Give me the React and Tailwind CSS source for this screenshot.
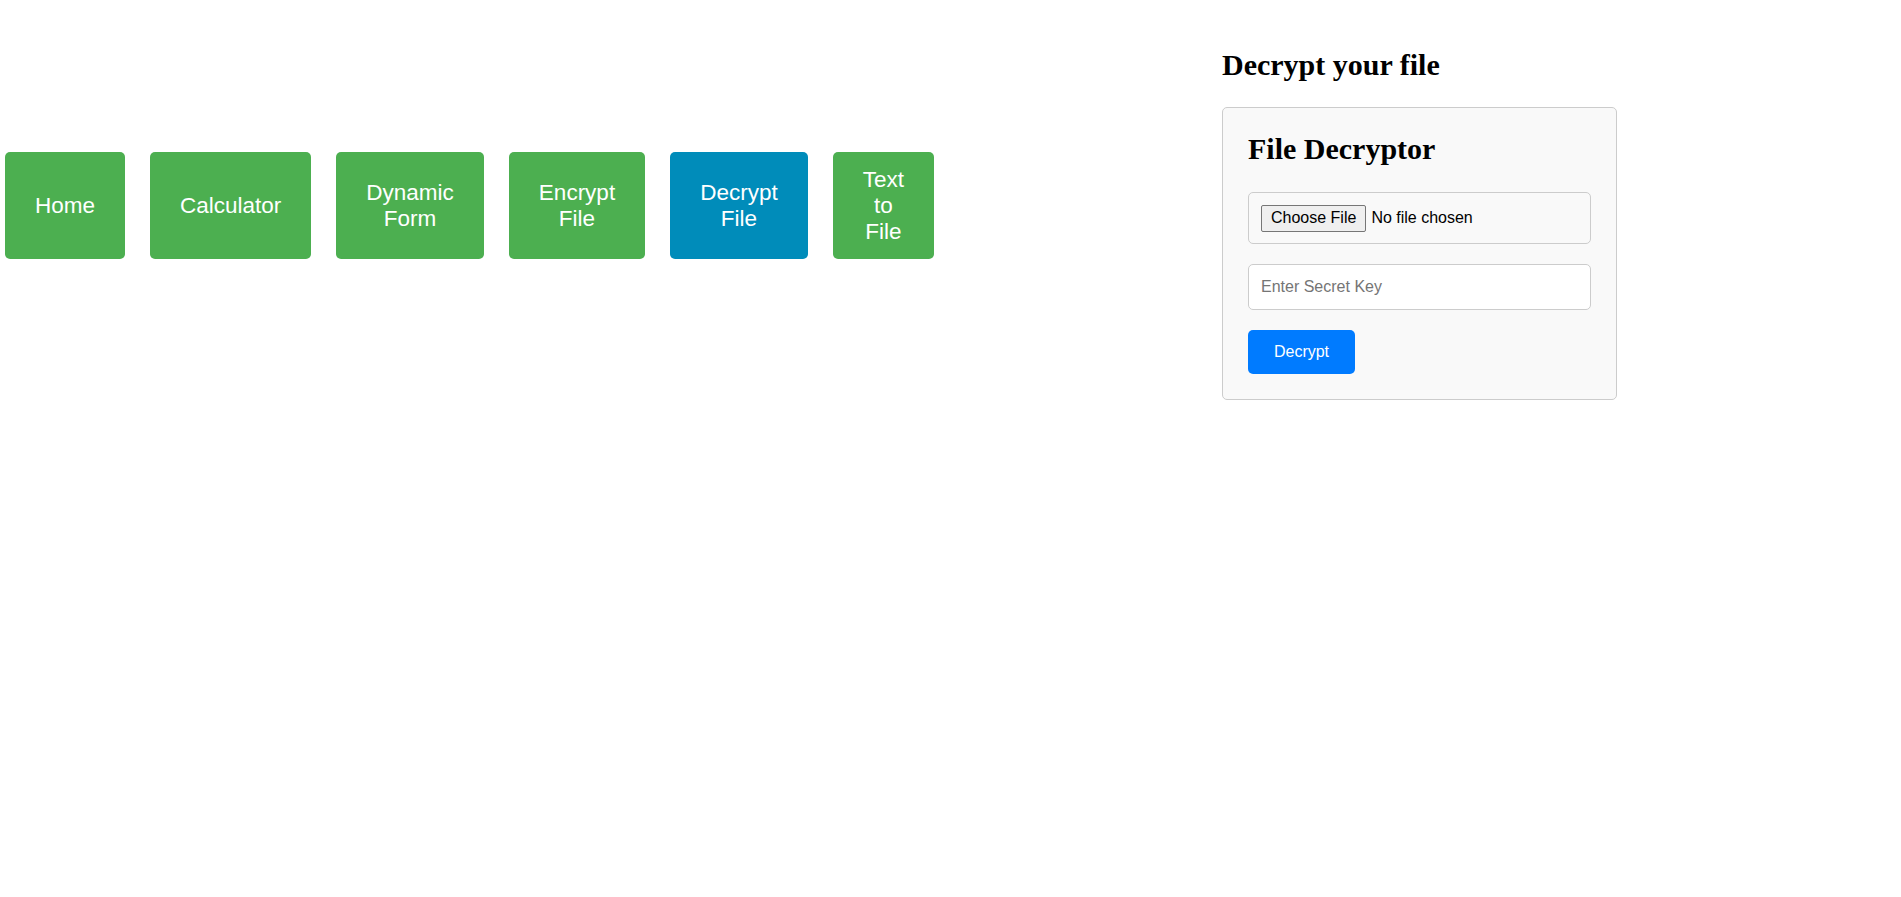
import React, { useState } from 'react';

const links = [
  { label: ['Home'] },
  { label: ['Calculator'] },
  { label: ['Dynamic', 'Form'] },
  { label: ['Encrypt', 'File'] },
  { label: ['Decrypt', 'File'], active: true },
  { label: ['Text', 'to', 'File'] },
];

export default function App(){
  const [key, setKey] = useState('');

  return (
    <div className="flex items-start min-h-screen bg-white text-black font-['Liberation_Serif','Times_New_Roman',serif]">
      <nav className="mt-[152px] ml-[5px] w-[1217px] shrink-0 flex items-stretch gap-[25px] font-['Liberation_Sans',Arial,sans-serif]">
        {links.map((l, i) => (
          <button
            key={i}
            className={`flex items-center justify-center px-[30px] py-[15px] rounded-[5px] text-white text-[22.5px] leading-[25.8px] text-center ${l.active ? 'bg-[#008cba]' : 'bg-[#4caf50]'}`}
          >
            <span>
              {l.label.map((w, j) => (
                <span key={j} className="block">{w}</span>
              ))}
            </span>
          </button>
        ))}
      </nav>

      <section className="w-[395px] shrink-0 pt-[48px]">
        <h2 className="text-[30px] leading-[34px] font-bold mb-[25px]">Decrypt your file</h2>

        <div className="border border-[#ccc] bg-[#f9f9f9] rounded-[5px] px-[25px] pt-[24px] pb-[25px]">
          <h2 className="text-[30px] leading-[34px] font-bold mb-[26px]">File Decryptor</h2>

          <label className="flex items-center h-[52px] px-[12px] border border-[#ccc] rounded-[5px] font-['Liberation_Sans',Arial,sans-serif] text-[16px] cursor-pointer">
            <input type="file" className="hidden" />
            <span className="flex items-center h-[27px] px-[9px] border border-[#767676] bg-[#efefef] rounded-[2px]">Choose File</span>
            <span className="ml-[5px]">No file chosen</span>
          </label>

          <input
            value={key}
            onChange={e => setKey(e.target.value)}
            placeholder="Enter Secret Key"
            className="mt-[20px] block w-full h-[46px] px-[12px] border border-[#ccc] rounded-[5px] bg-white text-[16px] font-['Liberation_Sans',Arial,sans-serif] placeholder:text-[#757575] outline-none"
          />

          <button className="mt-[20px] block w-[107px] h-[44px] rounded-[5px] bg-[#007bff] text-white text-[16px] font-['Liberation_Sans',Arial,sans-serif]">
            Decrypt
          </button>
        </div>
      </section>
    </div>
  );
}
